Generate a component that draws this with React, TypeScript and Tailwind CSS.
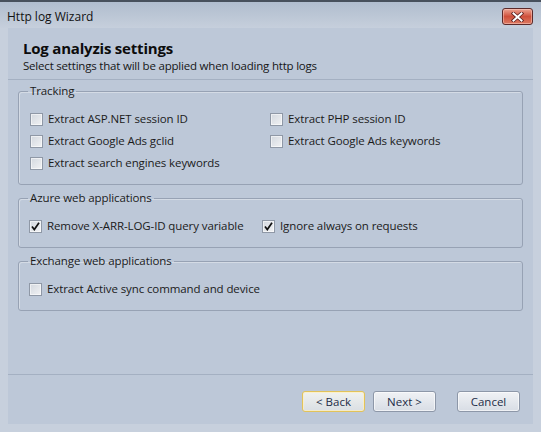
import React from 'react'

const font = { fontFamily: '"Open Sans", "Noto Sans", "Liberation Sans", sans-serif' }

function Check({ checked }: { checked?: boolean }) {
  return (
    <span className="relative w-[13px] h-[13px] shrink-0 border border-[#8f98a6] bg-gradient-to-br from-[#d3d8df] to-[#f1f2f4] shadow-[inset_0_0_0_1px_rgba(255,255,255,0.55)]">
      {checked && (
        <svg className="absolute left-[1px] top-[1px]" width="9" height="9" viewBox="0 0 9 9">
          <path d="M1 4.6 L3.3 7.6 L8 0.8" fill="none" stroke="#111" strokeWidth="1.7" strokeLinejoin="miter" />
        </svg>
      )}
    </span>
  )
}

function Option({ label, checked }: { label: string; checked?: boolean }) {
  return (
    <label className="flex items-center h-[22px] gap-[5px] text-[11.5px] tracking-[-0.1px] text-[#1b1b1b] whitespace-nowrap">
      <Check checked={checked} />
      <span>{label}</span>
    </label>
  )
}

function Group({ title, children, className = '' }: { title: string; children: React.ReactNode; className?: string }) {
  return (
    <fieldset className={`border border-[#97a2b4] rounded-[3px] pl-[9px] pr-[9px] pb-[10px] shadow-[inset_1px_1px_0_rgba(255,255,255,0.35)] ${className}`}>
      <legend className="px-[2px] h-[16px] leading-[16px] text-[11.5px] tracking-[-0.1px] text-[#1b1b1b]">{title}</legend>
      <div className="pt-[9px] pl-[1px]">{children}</div>
    </fieldset>
  )
}

function Button({ children, focused }: { children: React.ReactNode; focused?: boolean }) {
  return (
    <button
      className={`w-[63px] h-[21px] rounded-[3px] border text-[11.5px] leading-none text-[#1d2c47] ${
        focused
          ? 'border-[#e2c35a] bg-gradient-to-b from-[#f1f2ef] to-[#dadfe4] shadow-[inset_0_0_0_1px_rgba(255,240,190,0.7)]'
          : 'border-[#8d97a8] bg-gradient-to-b from-[#f0f2f5] to-[#d8dde5] shadow-[inset_0_0_0_1px_rgba(255,255,255,0.6)]'
      }`}
    >
      {children}
    </button>
  )
}

export default function App() {
  return (
    <div style={font} className="w-[541px] h-[432px] bg-[#c7d0dd] flex flex-col overflow-hidden border-t-2 border-[#47505c]">
      <div className="h-[26px] flex items-center justify-between pl-[7px] pr-[8px] bg-gradient-to-b from-[#b0bdce] to-[#c6cfdc]">
        <span className="text-[12px] text-[#111] leading-none pt-[4px]">Http log Wizard</span>
        <button className="w-[31px] h-[17px] mt-[3px] rounded-[3px] border border-[#5b2a2a] bg-gradient-to-b from-[#eba393] via-[#cf4f3b] to-[#dc7a62] flex items-center justify-center shadow-[inset_0_0_0_1px_rgba(255,210,200,0.5)]">
          <svg width="13" height="10" viewBox="0 0 13 10">
            <path d="M2.5 1.5 L10.5 8.5 M10.5 1.5 L2.5 8.5" stroke="#5a2020" strokeWidth="3.6" strokeLinecap="square" />
            <path d="M2.5 1.5 L10.5 8.5 M10.5 1.5 L2.5 8.5" stroke="#fff" strokeWidth="2" strokeLinecap="square" />
          </svg>
        </button>
      </div>

      <div className="mx-[8px] mb-[8px] flex-1 bg-[#bdc8d8] flex flex-col">
        <div className="h-[52px] border-b border-[#a4b0c2] pl-[15px] pt-[10px]">
          <div className="text-[15px] font-bold leading-[20px] tracking-[-0.2px] text-[#0c0c0c]">Log analyzis settings</div>
          <div className="text-[11.5px] leading-[16px] tracking-[-0.2px] text-[#161616]">Select settings that will be applied when loading http logs</div>
        </div>

        <div className="px-[10px] pt-[3px] flex flex-col">
          <Group title="Tracking">
            <div className="grid grid-cols-[240px_1fr] ml-[1px]">
              <Option label="Extract ASP.NET session ID" />
              <Option label="Extract PHP session ID" />
              <Option label="Extract Google Ads gclid" />
              <Option label="Extract Google Ads keywords" />
              <Option label="Extract search engines keywords" />
            </div>
          </Group>

          <Group title="Azure web applications" className="mt-[5px]">
            <div className="grid grid-cols-[233px_1fr]">
              <Option label="Remove X-ARR-LOG-ID query variable" checked />
              <Option label="Ignore always on requests" checked />
            </div>
          </Group>

          <Group title="Exchange web applications" className="mt-[5px]">
            <Option label="Extract Active sync command and device" />
          </Group>
        </div>

        <div className="flex-1" />

        <div className="h-[50px] border-t border-[#a4b0c2] flex justify-end items-start pt-[16px] pr-[13px]">
          <Button focused>&lt; Back</Button>
          <div className="w-[8px]" />
          <Button>Next &gt;</Button>
          <div className="w-[21px]" />
          <Button>Cancel</Button>
        </div>
      </div>
    </div>
  )
}
